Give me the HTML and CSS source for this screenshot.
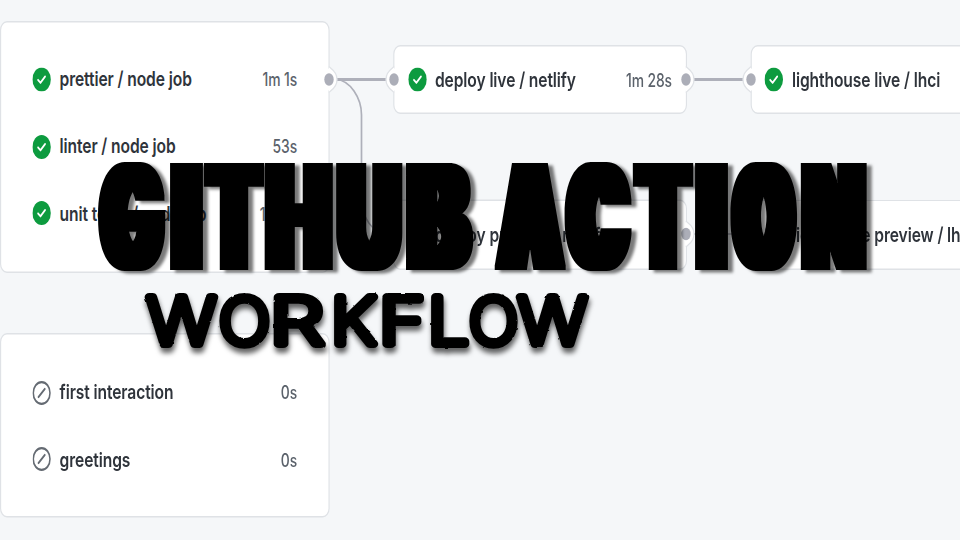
FILE: index.html
```
<!DOCTYPE html>
<html lang="en">
<head>
<meta charset="utf-8">
<title>GitHub Action Workflow</title>
<link rel="stylesheet" href="styles.css">
</head>
<body>
<svg class="defs" width="0" height="0" aria-hidden="true">
  <symbol id="ok" viewBox="0 0 16 16"><circle cx="8" cy="8" r="8" fill="#0d9b3f"/><path d="M4.9 8.3 7 10.2 11 6" fill="none" stroke="#fff" stroke-width="1.4" stroke-linecap="round" stroke-linejoin="round"/></symbol>
  <symbol id="skip" viewBox="0 0 16 16"><circle cx="8" cy="8" r="7.25" fill="none" stroke="#656b73" stroke-width="1.4"/><path d="M5.3 10.7 10.7 5.3" fill="none" stroke="#656b73" stroke-width="1.5" stroke-linecap="round"/></symbol>
</svg>
<main class="stage">
  <div class="graph">
    <section class="card checks">
      <div class="job"><svg class="icon"><use href="#ok"/></svg><span class="name">prettier / node job</span><span class="time">1m 1s</span></div>
      <div class="job"><svg class="icon"><use href="#ok"/></svg><span class="name">linter / node job</span><span class="time">53s</span></div>
      <div class="job"><svg class="icon"><use href="#ok"/></svg><span class="name">unit tests / node job</span><span class="time">1m 2s</span></div>
    </section>
    <section class="card single deploy live">
      <div class="job"><svg class="icon"><use href="#ok"/></svg><span class="name">deploy live / netlify</span><span class="time">1m 28s</span></div>
    </section>
    <section class="card single lighthouse live">
      <div class="job"><svg class="icon"><use href="#ok"/></svg><span class="name">lighthouse live / lhci</span></div>
    </section>
    <section class="card single deploy preview">
      <div class="job"><svg class="icon"><use href="#skip"/></svg><span class="name">deploy preview / netlify</span><span class="time">0s</span></div>
    </section>
    <section class="card single lighthouse preview">
      <div class="job"><svg class="icon"><use href="#skip"/></svg><span class="name">lighthouse preview / lhci</span></div>
    </section>
    <section class="card community">
      <div class="job"><svg class="icon"><use href="#skip"/></svg><span class="name">first interaction</span><span class="time">0s</span></div>
      <div class="job"><svg class="icon"><use href="#skip"/></svg><span class="name">greetings</span><span class="time">0s</span></div>
    </section>
  </div>

  <svg class="overlay" viewBox="0 0 960 540" width="960" height="540">
    <defs>
      <g id="port-r"><ellipse rx="8" ry="11" fill="#fff"/><path d="M0-13C1-11 8-9 8 0S1 11 0 13" fill="#fff" stroke="#dfe2e6" stroke-width="1.3"/><ellipse rx="4.7" ry="6.2" fill="#acaeb8"/></g>
      <g id="port-l"><ellipse rx="8" ry="11" fill="#fff"/><path d="M0-13C-1-11-8-9-8 0S-1 11 0 13" fill="#fff" stroke="#dfe2e6" stroke-width="1.3"/><ellipse rx="4.7" ry="6.2" fill="#acaeb8"/></g>
      <filter id="heavy" filterUnits="userSpaceOnUse" x="60" y="130" width="860" height="180" color-interpolation-filters="sRGB">
        <feMorphology in="SourceGraphic" operator="dilate" radius="8 2" result="fat"/>
        <feDropShadow in="fat" dx="5" dy="2.5" stdDeviation="1.6" flood-color="#000" flood-opacity=".52"/>
      </filter>
      <filter id="rough" filterUnits="userSpaceOnUse" x="120" y="270" width="500" height="110" color-interpolation-filters="sRGB">
        <feTurbulence type="fractalNoise" baseFrequency=".14" numOctaves="2" seed="4" result="n"/>
        <feDisplacementMap in="SourceGraphic" in2="n" scale="2" xChannelSelector="R" yChannelSelector="G" result="r"/>
        <feDropShadow in="r" dx="1" dy="5" stdDeviation="2.6" flood-color="#000" flood-opacity=".6"/>
      </filter>
    </defs>
    <g fill="none" stroke="#aeb0ba">
      <path d="M336 79.5H388M693 79.5H746" stroke-width="2.8"/>
      <path d="M336 79.5C350 80 361.5 98 361.5 115V199C361.5 216 372 234 388 234M693 234H746" stroke-width="1.7"/>
    </g>
    <use href="#port-r" x="329" y="79.5"/>
    <use href="#port-l" x="394" y="79.5"/>
    <use href="#port-r" x="686" y="79.5"/>
    <use href="#port-l" x="751" y="79.5"/>
    <use href="#port-l" x="394" y="234"/>
    <use href="#port-r" x="686" y="234"/>
    <use href="#port-l" x="751" y="234"/>
    <g filter="url(#heavy)">
      <text class="headline" y="268"><tspan x="103" textLength="57.5" lengthAdjust="spacingAndGlyphs">G</tspan><tspan x="172.5" textLength="28" lengthAdjust="spacingAndGlyphs">I</tspan><tspan x="209.5" textLength="49" lengthAdjust="spacingAndGlyphs">T</tspan><tspan x="268" textLength="61.5" lengthAdjust="spacingAndGlyphs">H</tspan><tspan x="339.5" textLength="59.5" lengthAdjust="spacingAndGlyphs">U</tspan><tspan x="409" textLength="59" lengthAdjust="spacingAndGlyphs">B</tspan> <tspan class="black" x="501" textLength="58.5" lengthAdjust="spacingAndGlyphs">A</tspan><tspan class="black" x="570" textLength="56" lengthAdjust="spacingAndGlyphs">C</tspan><tspan x="638.5" textLength="49" lengthAdjust="spacingAndGlyphs">T</tspan><tspan x="697.5" textLength="28" lengthAdjust="spacingAndGlyphs">I</tspan><tspan class="black" x="736" textLength="55.5" lengthAdjust="spacingAndGlyphs">O</tspan><tspan x="804.5" textLength="58.5" lengthAdjust="spacingAndGlyphs">N</tspan></text>
    </g>
    <g filter="url(#rough)">
      <text class="subline" y="344"><tspan x="147" textLength="69" lengthAdjust="spacingAndGlyphs">W</tspan><tspan x="219" textLength="51" lengthAdjust="spacingAndGlyphs">O</tspan><tspan x="270" textLength="54" lengthAdjust="spacingAndGlyphs">R</tspan><tspan x="331" textLength="45" lengthAdjust="spacingAndGlyphs">K</tspan><tspan x="379" textLength="46" lengthAdjust="spacingAndGlyphs">F</tspan><tspan x="428" textLength="41" lengthAdjust="spacingAndGlyphs">L</tspan><tspan x="469" textLength="49" lengthAdjust="spacingAndGlyphs">O</tspan><tspan x="518" textLength="69" lengthAdjust="spacingAndGlyphs">W</tspan></text>
    </g>
  </svg>
</main>
</body>
</html>
```
FILE: styles.css
```
body {
  margin: 0;
  background: #f5f7f9;
  font-family: Inter, "Liberation Sans", sans-serif;
}

.defs {
  position: absolute;
}

.stage {
  position: relative;
  width: 960px;
  height: 540px;
  overflow: hidden;
}

/* The graph is drawn on its own canvas and stretched to the stage. */
.graph {
  position: relative;
  width: 830px;
  height: 360px;
  transform: scale(1.1566, 1.5);
  transform-origin: 0 0;
}

.card {
  position: absolute;
  box-sizing: border-box;
  display: flex;
  flex-direction: column;
  justify-content: center;
  background: #fff;
  border: 1px solid #dfe2e6;
  border-radius: 6px;
}

.checks {
  left: 0;
  top: 13.5px;
  width: 285.3px;
  height: 168px;
  padding: 0 27.5px 0 27px;
}

.community {
  left: 0;
  top: 222.3px;
  width: 285.3px;
  height: 122.7px;
  padding: 1px 27.5px 0 27px;
}

.single {
  height: 46.5px;
  padding: 0 12px 0 11.5px;
}

.live { top: 29.8px; }
.preview { top: 133px; }
.deploy { left: 340px; width: 254px; }
.lighthouse { left: 648.7px; width: 254px; }

.job {
  display: flex;
  align-items: center;
  height: 44.67px;
  white-space: nowrap;
}

.icon {
  flex: none;
  width: 16px;
  height: 16px;
  margin-right: 7.5px;
}

.name {
  flex: 1;
  padding-bottom: 1px;
  color: #2f343b;
  font-size: 13.5px;
  font-weight: 600;
  letter-spacing: -0.08px;
}

.time {
  color: #5b626b;
  font-size: 12px;
  font-weight: 500;
  letter-spacing: -0.1px;
}

.overlay {
  position: absolute;
  left: 0;
  top: 0;
}

.headline {
  font-family: Inter, sans-serif;
  font-size: 141px;
  font-weight: 800;
}

.headline .black {
  font-weight: 900;
}

.subline {
  font-family: Inter, sans-serif;
  font-size: 64px;
  font-weight: 200;
  stroke: #000;
  stroke-width: 8px;
  stroke-linejoin: round;
}
```
